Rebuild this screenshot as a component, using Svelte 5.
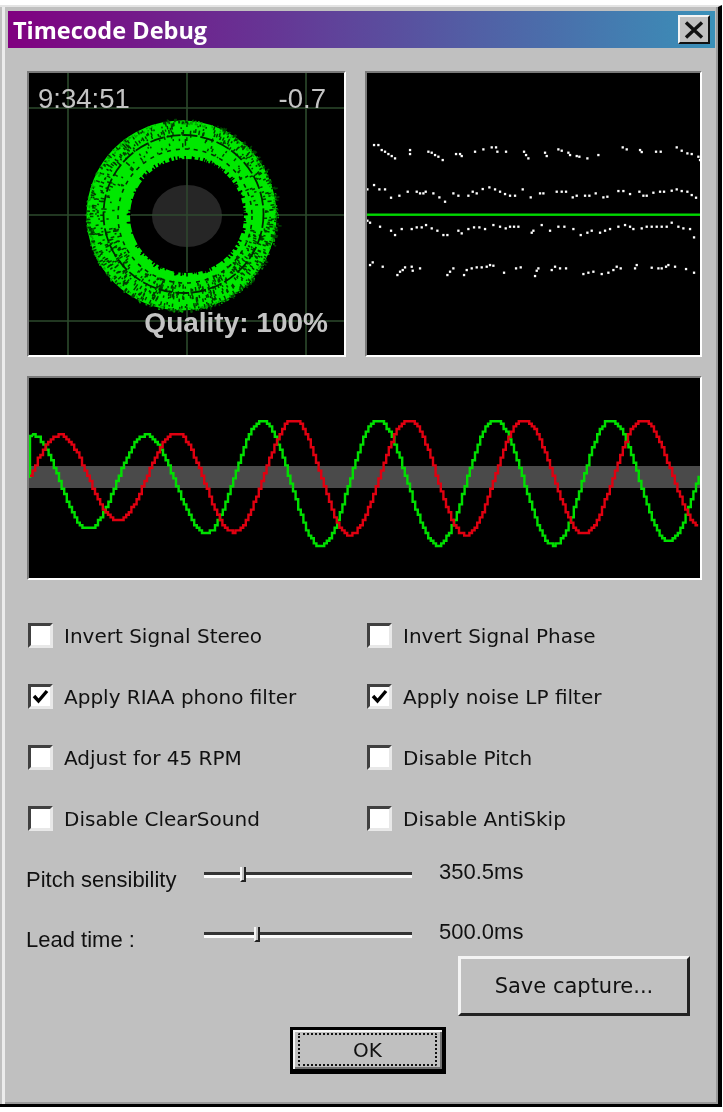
<script>
  const rows = [
    [{ label: "Invert Signal Stereo" }, { label: "Invert Signal Phase" }],
    [{ label: "Apply RIAA phono filter", on: true }, { label: "Apply noise LP filter", on: true }],
    [{ label: "Adjust for 45 RPM" }, { label: "Disable Pitch" }],
    [{ label: "Disable ClearSound" }, { label: "Disable AntiSkip" }],
  ];
  const checks = rows.flat();

  const sliders = [
    { label: "Pitch sensibility", value: "350.5ms", pos: 36 },
    { label: "Lead time :", value: "500.0ms", pos: 50 },
  ];

  // cheap seeded random so the scope looks the same every time
  let seed = 1234;
  function rnd() {
    seed = (seed * 16807) % 2147483647;
    return seed / 2147483647;
  }

  // dark radial flecks punched into the solid ring
  function fleckPath() {
    let d = "";
    for (let i = 0; i < 1100; i++) {
      const a = rnd() * Math.PI * 2;
      const s = Math.sin(a);
      const c = Math.cos(a);
      const r = 66 + rnd() * 29;
      // the upper inner band stays almost solid, the lower half is broken up
      if (s < 0.2 && r < 80 && rnd() < 0.75) continue;
      const x = 184 + r * c;
      const y = 215.5 + r * s;
      const l = 1.5 + rnd() * 2.5;
      d += `M${x.toFixed(1)} ${y.toFixed(1)}l${(l * c).toFixed(1)} ${(l * s).toFixed(1)}`;
    }
    return d;
  }

  // black nicks along the hole so its edge is jagged too
  function nickPath() {
    let d = "";
    for (let i = 0; i < 130; i++) {
      const a = rnd() * Math.PI * 2;
      const s = Math.sin(a);
      const c = Math.cos(a);
      const l = 2 + rnd() * 3;
      const x = 187 + 56 * c;
      const y = 216 + 56 * s;
      d += `M${x.toFixed(1)} ${y.toFixed(1)}l${(l * c).toFixed(1)} ${(l * s).toFixed(1)}`;
    }
    return d;
  }

  // spikes round the rim so the edge is not a clean circle
  function rimPath() {
    let d = "";
    for (let i = 0; i < 420; i++) {
      const a = rnd() * Math.PI * 2;
      const s = Math.sin(a);
      const c = Math.cos(a);
      const r = 92 + rnd() * 4;
      const x = 181.5 + r * c;
      const y = 215.5 + r * s;
      d += `M${x.toFixed(1)} ${y.toFixed(1)}h1.6v1.6h-1.6z`;
    }
    return d;
  }
  const flecks = fleckPath();
  const nicks = nickPath();
  const rim = rimPath();

  // dots of the right panel, measured off the screenshot at 3x
  const dotRows = [
    [42,435,55,435,65,450,75,455,85,462,95,468,105,475,150,450,150,462,205,455,215,458,225,465,235,470,248,480,288,462,300,462,305,468,345,455,370,448,395,442,408,442,412,455,438,455,492,455,498,465,505,475,555,458,560,468,595,448,605,452,625,458,630,465,650,468,658,470,682,475,715,465,788,442,800,448,840,450,845,456,888,455,902,455,950,442,965,452,982,460,995,462,1015,470,1020,480],
    [22,568,42,555,58,568,75,568,93,593,118,587,143,575,170,575,180,580,190,580,197,575,220,580,238,592,255,605,280,580,295,587,325,587,338,575,350,580,368,567,388,562,405,568,420,575,435,582,450,587,465,587,488,568,512,592,540,580,550,580,590,575,605,575,618,575,638,592,650,587,675,587,688,587,707,580,730,592,742,590,775,573,790,573,810,582,838,575,850,587,860,587,880,578,900,575,912,575,935,572,950,568,965,573,982,575,995,585,1008,593],
    [22,662,30,668,60,680,93,692,105,705,125,687,155,687,170,682,185,682,198,675,215,685,232,692,250,705,262,705,295,692,305,700,325,687,342,682,358,682,375,687,400,675,420,680,437,685,450,680,462,680,475,680,515,698,520,692,545,675,570,692,595,680,613,680,640,687,662,705,682,698,695,692,720,698,735,692,750,687,775,680,795,675,810,680,820,687,845,685,860,680,875,680,890,680,905,680,920,680,935,668,955,680,970,685,990,687,1002,712],
    [30,795,38,787,68,800,112,825,120,815,128,810,135,802,155,800,158,812,180,805,262,825,270,815,280,805,312,825,320,810,335,805,350,802,365,802,380,800,390,795,400,797,432,818,468,805,482,802,525,828,530,812,535,805,575,810,585,800,600,805,618,805,670,822,685,818,700,815,725,822,745,818,760,810,770,800,782,805,825,805,830,795,875,803,895,805,905,805,918,800,925,795,945,800,978,807,1002,818],
  ];
  const dots = [];
  for (const r of dotRows) {
    for (let i = 0; i < r.length; i += 2) {
      dots.push({ x: 360 + r[i] / 3, y: r[i + 1] / 3 });
    }
  }

  // extrema of each wave in page coordinates, cosine between them
  const greenPts = [[32,435],[87,529],[145,435],[206,533],[261,421],[320,546],[377,420],[437,545],[494,420],[553,545],[610,420],[668,541],[726,420]];
  const redPts = [[-1,521],[59,435],[117,521],[175,433],[233,532],[293,420],[349,535],[408,420],[465,535],[523,420],[583,534],[642,420],[700,526]];

  function wave(pts, from) {
    let d = "";
    let seg = 0;
    for (let x = from; x <= 699; x += 2.6) {
      while (x > pts[seg + 1][0]) seg++;
      const [x0, y0] = pts[seg];
      const [x1, y1] = pts[seg + 1];
      const t = (x - x0) / (x1 - x0);
      const y = y0 + (y1 - y0) * (1 - Math.cos(Math.PI * t)) / 2;
      const sy = Math.round(y / 2.6) * 2.6;
      d += d ? `H${x.toFixed(1)}V${sy.toFixed(1)}` : `M${x} ${sy.toFixed(1)}`;
    }
    return d;
  }
  const green = "M30 478V436H32" + wave(greenPts, 33).replace("M", "L");
  const red = wave(redPts, 30);
</script>

<div class="window">
  <div class="title">
    <span class="title-text">Timecode Debug</span>
    <div class="close">
      <svg width="22" height="20" viewBox="0 0 22 20">
        <path d="M3 2.5 L19 17.5 M19 2.5 L3 17.5" stroke="#111" stroke-width="3.4" fill="none" />
      </svg>
    </div>
  </div>

  <div class="content">
    <div class="top-panels">
      <div class="panel scope">
        <svg width="315" height="282" viewBox="29 73 315 282">
          <path d="M68 73V355M187 73V355M306 73V355M29 108H344M29 215H344M29 321H344" stroke="#2c4a2c" stroke-width="1.6" fill="none" />
          <ellipse cx="187" cy="216" rx="35" ry="31" fill="#262626" />
          <path d="M187 185V247M152 215H222" stroke="#2f4a2f" stroke-width="1.4" />
          <path
            d="M86.5 215.5a95 95 0 1 0 190 0a95 95 0 1 0 -190 0zM130 216a57 57 0 1 0 114 0a57 57 0 1 0 -114 0z"
            fill="#00e800"
            fill-rule="evenodd"
          />
          <path d={rim} fill="#00a800" />
          <path d={flecks} stroke="#004000" stroke-width="1.5" fill="none" />
          <path d={nicks} stroke="#000" stroke-width="1.5" fill="none" />
          <ellipse cx="183.5" cy="214" rx="80" ry="79" fill="none" stroke="#002800" stroke-width="1.8" stroke-dasharray="14 3" />
          <ellipse cx="185" cy="216" rx="67" ry="67" fill="none" stroke="#003000" stroke-width="1.6" stroke-dasharray="4 5" />
          <text x="38" y="108" class="osd">9:34:51</text>
          <text x="326" y="108" class="osd" text-anchor="end">-0.7</text>
          <text x="328" y="332" class="osd quality" text-anchor="end">Quality: 100%</text>
        </svg>
      </div>
      <div class="panel stereo">
        <svg width="333" height="282" viewBox="367 73 333 282">
          {#each dots as dot}
            <rect x={dot.x - 1.1} y={dot.y - 1.1} width="2.3" height="2.3" fill="#fff" />
          {/each}
          <rect x="367" y="213.5" width="333" height="2.4" fill="#00d800" />
        </svg>
      </div>
    </div>

    <div class="panel wave">
      <svg width="671" height="200" viewBox="29 378 671 200">
        <rect x="29" y="466" width="671" height="22" fill="#4a4a4a" />
        <path d={green} fill="none" stroke="#00e000" stroke-width="2.4" />
        <path d={red} fill="none" stroke="#e00010" stroke-width="2.4" />
      </svg>
    </div>

    <div class="checks">
      {#each checks as check}
        <div class="check">
          <div class="box">
            {#if check.on}
              <svg width="19" height="19" viewBox="0 0 19 19">
                <path d="M3 9 L7.5 14 L16 4" fill="none" stroke="#000" stroke-width="3.4" />
              </svg>
            {/if}
          </div>
          <span>{check.label}</span>
        </div>
      {/each}
    </div>

    <div class="sliders">
      {#each sliders as slider}
        <div class="slider">
          <span class="slider-label">{slider.label}</span>
          <div class="track">
            <div class="thumb" style="left: {slider.pos}px"></div>
          </div>
          <span class="slider-value">{slider.value}</span>
        </div>
      {/each}
    </div>

    <div class="save-row">
      <div class="button save">Save capture...</div>
    </div>
    <div class="ok-row">
      <div class="button ok"><span class="focus">OK</span></div>
    </div>
  </div>
</div>

<style>
  :global(body) {
    background: #fff;
  }

  .window {
    box-sizing: border-box;
    width: 722px;
    height: 1102px;
    margin-top: 5px;
    background: #c0c0c0;
    border-top: 2px solid #e4e4e4;
    border-right: 4px solid #000;
    border-bottom: 3px solid #000;
    box-shadow: inset 2px 0 #c0c0c0, inset 5px 0 #ececec, inset -2px 0 #9a9a9a, inset 0 -2px #9a9a9a;
    font-family: "DejaVu Sans", Verdana, sans-serif;
    font-size: 20px;
    color: #111;
    filter: blur(0.5px);
  }

  .title {
    display: flex;
    align-items: center;
    justify-content: space-between;
    box-sizing: border-box;
    height: 37px;
    margin: 4px 3px 0 8px;
    padding: 0 5px;
    background: linear-gradient(to right, #800080, #3a90b8);
  }

  .title-text {
    color: #fff;
    font-family: "Open Sans", sans-serif;
    font-weight: 700;
    font-size: 23.5px;
    line-height: 30px;
  }

  .close {
    display: flex;
    align-items: center;
    justify-content: center;
    box-sizing: border-box;
    width: 32px;
    height: 29px;
    background: #c0c0c0;
    border-top: 2px solid #f4f4f4;
    border-left: 2px solid #f4f4f4;
    border-right: 2px solid #111;
    border-bottom: 2px solid #111;
  }

  .content {
    padding: 23px 0 0 27px;
  }

  .top-panels {
    display: flex;
    gap: 19px;
  }

  .panel {
    border-top: 2px solid #7a7a7a;
    border-left: 2px solid #7a7a7a;
    border-right: 2px solid #fff;
    border-bottom: 2px solid #fff;
    background: #000;
    line-height: 0;
    width: fit-content;
  }

  .panel svg {
    display: block;
  }

  .wave {
    margin-top: 19px;
  }

  .osd {
    fill: #c4c4c4;
    font-family: "Liberation Sans", sans-serif;
    font-size: 27.5px;
  }

  .quality {
    font-weight: 700;
    font-size: 28px;
  }

  .checks {
    display: grid;
    grid-template-columns: 339px 339px;
    row-gap: 36px;
    margin-top: 43px;
    margin-left: 1px;
  }

  .check {
    display: flex;
    align-items: center;
    gap: 11px;
    height: 25px;
  }

  .box {
    display: flex;
    align-items: center;
    justify-content: center;
    box-sizing: border-box;
    width: 25px;
    height: 25px;
    background: #fff;
    border-top: 3px solid #404040;
    border-left: 3px solid #404040;
    border-right: 3px solid #e8e8e8;
    border-bottom: 3px solid #e8e8e8;
  }

  .sliders {
    margin-top: 29px;
    margin-left: -1px;
    font-family: "Liberation Sans", Arial, sans-serif;
  }

  .slider {
    display: flex;
    align-items: flex-start;
    height: 60px;
  }

  .slider + .slider {
    height: 36px;
  }

  .slider-label {
    width: 178px;
    margin-top: 8px;
    line-height: 24px;
    font-size: 22px;
  }

  .track {
    position: relative;
    box-sizing: border-box;
    width: 208px;
    height: 6px;
    margin-top: 12px;
    border-top: 3px solid #333;
    border-bottom: 3px solid #fafafa;
  }

  .thumb {
    position: absolute;
    top: -8px;
    width: 6px;
    height: 15px;
    background: #c0c0c0;
    border-left: 2px solid #f4f4f4;
    border-right: 2px solid #222;
    border-bottom: 2px solid #222;
    box-sizing: border-box;
  }

  .slider-value {
    margin-left: 27px;
    line-height: 24px;
    font-size: 22px;
  }

  .button {
    display: flex;
    align-items: center;
    justify-content: center;
    box-sizing: border-box;
    background: #c0c0c0;
  }

  .save-row {
    display: flex;
    justify-content: flex-end;
    padding-right: 28px;
  }

  .save {
    width: 232px;
    height: 60px;
    font-size: 21px;
    border-top: 3px solid #f4f4f4;
    border-left: 3px solid #f4f4f4;
    border-right: 3px solid #222;
    border-bottom: 3px solid #222;
  }

  .ok-row {
    margin-top: 11px;
    margin-left: 263px;
  }

  .ok {
    width: 156px;
    height: 47px;
    border: 3px solid #000;
    border-bottom-width: 5px;
    border-right-width: 4px;
    box-shadow: inset 2px 2px #f4f4f4, inset -2px -2px #707070;
    padding: 5px;
  }

  .focus {
    display: flex;
    align-items: center;
    justify-content: center;
    width: 100%;
    height: 100%;
    border: 2px dotted #111;
    border-radius: 2px;
  }
</style>
